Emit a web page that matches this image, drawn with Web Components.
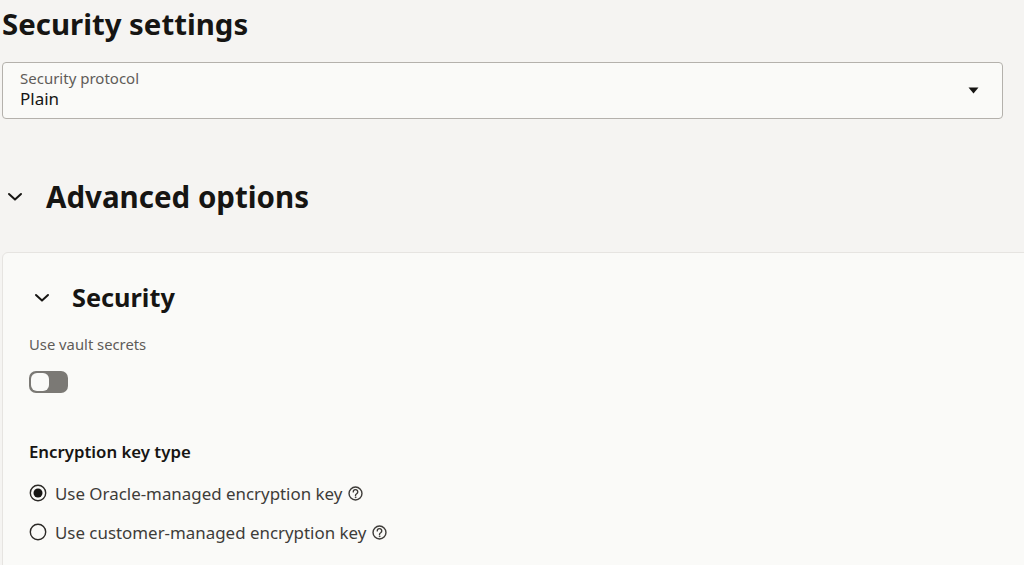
<!DOCTYPE html>
<html lang="en">
<head>
<meta charset="UTF-8">
<title>Security settings</title>
<style>
  html, body { margin: 0; height: 565px; overflow: hidden; background: #f5f4f2; }
  body { font-family: "Noto Sans", "Open Sans", sans-serif; color: #161513; }
</style>
</head>
<body>

<settings-page>
  <select-field label="Security protocol" value="Plain"></select-field>
  <options-card>
    <toggle-field label="Use vault secrets"></toggle-field>
    <radio-group label="Encryption key type">
      <radio-option checked>Use Oracle-managed encryption key</radio-option>
      <radio-option>Use customer-managed encryption key</radio-option>
    </radio-group>
  </options-card>
</settings-page>

<script>
  const chevron = `<svg width="16" height="10" viewBox="0 0 16 10" fill="none" stroke="#161513" stroke-width="2" stroke-linecap="round" stroke-linejoin="round"><path d="M2 2l6 5.6L14 2"/></svg>`;

  class SettingsPage extends HTMLElement {
    constructor() {
      super();
      this.attachShadow({ mode: 'open' });
      this.shadowRoot.innerHTML = `
        <style>
          :host { display: block; padding: 0 0 0 2px; }
          h1 { margin: 4px 0 18px 0; font-size: 29.4px; line-height: 40px; font-weight: 700; }
        </style>
        <h1>Security settings</h1>
        <slot></slot>
      `;
    }
  }

  class SelectField extends HTMLElement {
    constructor() {
      super();
      this.attachShadow({ mode: 'open' });
      this.shadowRoot.innerHTML = `
        <style>
          :host { display: flex; box-sizing: border-box; width: 1001px; height: 57px; align-items: center; justify-content: space-between;
            padding: 0 23px 0 17px; background: #fafaf8; border: 1px solid #b4b1ac; border-radius: 4px; }
          .label { font-size: 15px; line-height: 19px; color: #5f5c58; }
          .value { font-size: 17px; line-height: 22px; }
          .text { margin-top: -3px; }
          svg { display: block; }
        </style>
        <div class="text">
          <div class="label">${this.getAttribute('label')}</div>
          <div class="value">${this.getAttribute('value')}</div>
        </div>
        <svg width="11" height="7" viewBox="0 0 11 7"><path d="M0.5 0.5h10L5.5 6.5z" fill="#161513"/></svg>
      `;
    }
  }

  class OptionsCard extends HTMLElement {
    constructor() {
      super();
      this.attachShadow({ mode: 'open' });
      this.shadowRoot.innerHTML = `
        <style>
          :host { display: block; }
          .adv { display: flex; align-items: center; height: 40px; margin: 58px 0 35px 0; }
          .adv svg { margin: 0 23px 0 5px; }
          h2 { margin: 0; font-size: 29.5px; font-weight: 700; line-height: 40px; }
          .card { box-sizing: border-box; width: 1040px; height: 340px; padding: 25px 26px 0; background: #fafaf8;
            border: 1px solid #e6e4e1; border-radius: 6px; }
          .sec { display: flex; align-items: center; height: 40px; margin-bottom: 16px; }
          .sec svg { margin: 0 22px 0 5px; }
          h3 { margin: -3px 0 0; font-size: 25.3px; font-weight: 700; line-height: 40px; }
        </style>
        <div class="adv">${chevron}<h2>Advanced options</h2></div>
        <div class="card">
          <div class="sec">${chevron}<h3>Security</h3></div>
          <slot></slot>
        </div>
      `;
    }
  }

  class ToggleField extends HTMLElement {
    constructor() {
      super();
      this.attachShadow({ mode: 'open' });
      this.shadowRoot.innerHTML = `
        <style>
          :host { display: block; margin-bottom: 48px; }
          .label { font-size: 14.8px; line-height: 20px; color: #5f5c58; margin-bottom: 17px; }
          .track { box-sizing: border-box; width: 39px; height: 22px; background: #7b7975; border-radius: 7px; padding: 2px; }
          .knob { box-sizing: border-box; width: 18px; height: 18px; background: #fafaf8; border-radius: 6px; }
        </style>
        <div class="label">${this.getAttribute('label')}</div>
        <div class="track"><div class="knob"></div></div>
      `;
    }
  }

  class RadioGroup extends HTMLElement {
    constructor() {
      super();
      this.attachShadow({ mode: 'open' });
      this.shadowRoot.innerHTML = `
        <style>
          :host { display: block; }
          .label { font-size: 16.8px; line-height: 22px; font-weight: 600; margin-bottom: 17px; }
          .list { display: flex; flex-direction: column; gap: 13px; }
        </style>
        <div class="label">${this.getAttribute('label')}</div>
        <div class="list"><slot></slot></div>
      `;
    }
  }

  class RadioOption extends HTMLElement {
    constructor() {
      super();
      this.attachShadow({ mode: 'open' });
      const dot = this.hasAttribute('checked') ? '<circle cx="9" cy="9" r="4.5" fill="#161513"/>' : '';
      this.shadowRoot.innerHTML = `
        <style>
          :host { display: flex; align-items: center; height: 26px; font-size: 16.9px; color: #3e3c39; }
          .radio { margin-right: 8px; }
          .help { margin-left: 6px; }
          svg { display: block; }
        </style>
        <svg class="radio" width="18" height="18" viewBox="0 0 18 18"><circle cx="9" cy="9" r="7.7" fill="none" stroke="#2b2926" stroke-width="1.4"/>${dot}</svg>
        <span><slot></slot></span>
        <svg class="help" width="15" height="15" viewBox="0 0 16 16" fill="none" stroke="#3e3c39" stroke-width="1.5" stroke-linecap="round">
          <circle cx="8" cy="8" r="6.9"/>
          <path d="M5.6 6.3a2.4 2.4 0 1 1 3.7 2c-.9.6-1.3 1-1.3 1.7"/>
          <circle cx="8" cy="12" r=".5" fill="#3e3c39" stroke-width=".7"/>
        </svg>
      `;
    }
  }

  customElements.define('settings-page', SettingsPage);
  customElements.define('select-field', SelectField);
  customElements.define('options-card', OptionsCard);
  customElements.define('toggle-field', ToggleField);
  customElements.define('radio-group', RadioGroup);
  customElements.define('radio-option', RadioOption);
</script>
</body>
</html>
